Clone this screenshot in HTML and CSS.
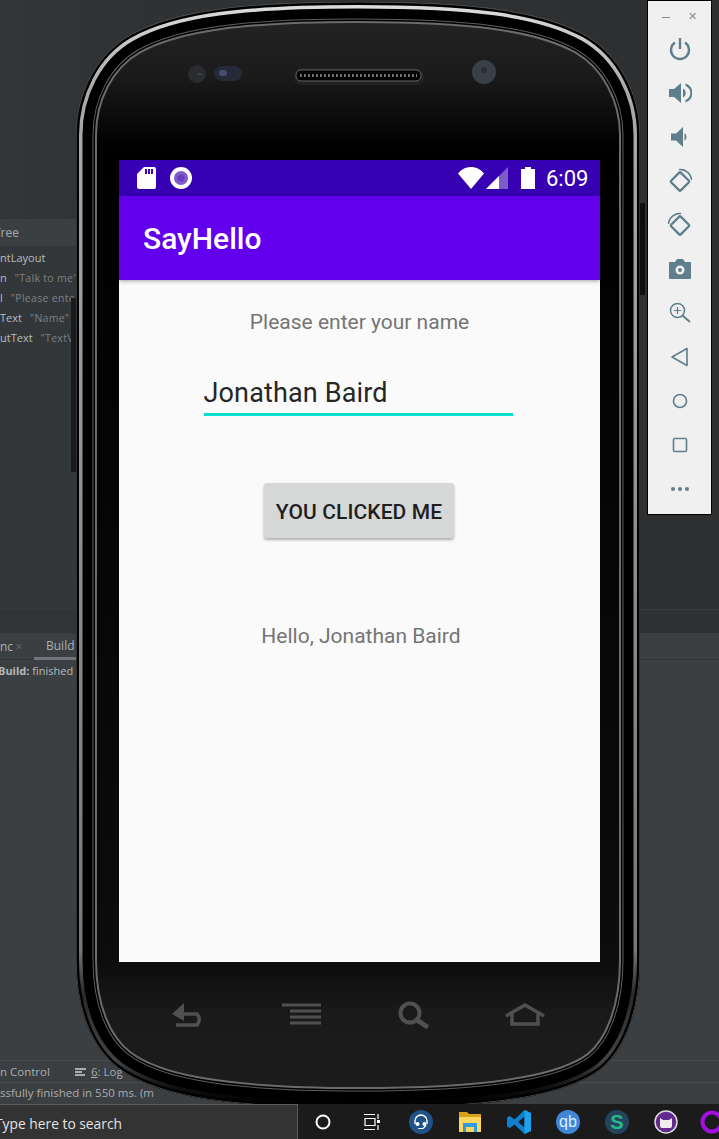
FILE: index.html
```html
<!DOCTYPE html>
<html lang="en">
<head>
<meta charset="utf-8">
<title>SayHello emulator</title>
<link rel="stylesheet" href="styles.css">
</head>
<body>
<div class="desktop">
  <div class="ide">
    <div class="ide-top"></div>
    <div class="tree-panel">
      <div class="tree-head">Tree</div>
      <div class="tree-row first"><span class="tree-name">ntLayout</span></div>
      <div class="tree-row"><span class="tree-name">n</span><span class="tree-val">"Talk to me"</span></div>
      <div class="tree-row"><span class="tree-name">l</span><span class="tree-val">"Please ente</span></div>
      <div class="tree-row"><span class="tree-name">Text</span><span class="tree-val">"Name"</span></div>
      <div class="tree-row"><span class="tree-name">utText</span><span class="tree-val">"TextV</span></div>
    </div>
    <div class="gap-panel"></div>
    <div class="build-panel">
      <div class="build-tabs"><span class="tab-sync">nc</span><span class="tab-x">✕</span><span class="tab-build">Build</span></div>
      <div class="build-line"><b>Build:</b> finished</div>
    </div>
    <div class="tool-strip"><span class="strip-a">n Control</span><svg class="log-icon" width="12" height="8" viewBox="0 0 12 8"><path d="M0 0h11v2H0zM0 3h7v2H0zM0 6h10v2H0z" fill="#a9adb0"/></svg><span class="strip-b"><u>6</u>: Log</span></div>
    <div class="status-strip">ssfully finished in 550 ms. (m</div>
    <div class="taskbar">
      <div class="search-box">Type here to search</div>
      <div class="task-icons">
        <svg width="20" height="20" viewBox="0 0 20 20"><circle cx="10" cy="10" r="6.500" fill="none" stroke="#fff" stroke-width="2"/></svg>
        <svg width="18" height="18" viewBox="0 0 18 18"><path d="M1 1.500h11M1 16.500h11M2 5.500h10v7H2zM15 1v5M15 12v5" fill="none" stroke="#fff" stroke-width="1.200"/><path d="M14 7h3v3h-3z" fill="#fff"/></svg>
        <svg width="24" height="24" viewBox="0 0 24 24"><circle cx="12" cy="12" r="12" fill="#1f5287"/><path d="M6 14v-3a6 6 0 0 1 12 0v3" fill="none" stroke="#fff" stroke-width="1.400"/><circle cx="8.500" cy="14" r="2" fill="#fff"/><circle cx="15.500" cy="14" r="2" fill="#fff"/><path d="M9 18.500h5l3-3" fill="none" stroke="#fff" stroke-width="1.200"/></svg>
        <svg width="22" height="20" viewBox="0 0 22 20"><path d="M0 0h8l2 2h12v18H0z" fill="#d9a21b"/><path d="M0 5h22v15H0z" fill="#fbd75f"/><path d="M4 11h14v9h-3v-5H7v5H4z" fill="#2f9ae0"/></svg>
        <svg width="24" height="24" viewBox="0 0 24 24"><path d="M17.500 0 24 3v18l-6.500 3-10-9.500L2.800 18 0 16.500v-9L2.800 6 7.500 9.500zM17.500 6.500 11 12l6.500 5.500z" fill="#0f80cf"/><path d="M17.500 0 24 3v18l-6.500 3z" fill="#1ea0ec"/></svg>
        <svg width="24" height="24" viewBox="0 0 24 24"><circle cx="12" cy="12" r="12" fill="#3f86d9"/><text x="12" y="17" text-anchor="middle" class="qb">qb</text></svg>
        <svg width="24" height="24" viewBox="0 0 24 24"><circle cx="12" cy="12" r="12" fill="#25445c"/><text x="12" y="19" text-anchor="middle" class="sig">S</text></svg>
        <svg width="24" height="24" viewBox="0 0 24 24"><circle cx="12" cy="12" r="11" fill="#63298f" stroke="#ddd" stroke-width="1.500"/><path d="M6 8l3 2h6l3-2v8q0 2-2 2H8q-2 0-2-2z" fill="#eee"/></svg>
        <svg class="task-last" width="24" height="24" viewBox="0 0 24 24"><circle cx="12" cy="12" r="9.500" fill="none" stroke="#a010e0" stroke-width="4"/></svg>
      </div>
    </div>
  </div>

  <svg class="phone" width="580" height="1104" viewBox="70 0 580 1104">
    <defs>
      <path id="body" d="M358 2C470 2 540 10 585 35C620 55 640 95 640 135V960C640 1010 625 1050 600 1070C570 1092 510 1108 358 1108C210 1108 150 1092 118 1068C92 1048 76 1010 76 960V135C76 95 95 55 130 35C175 10 245 2 358 2Z"/>
      <clipPath id="inside"><use href="#body"/></clipPath>
      <linearGradient id="glass" gradientUnits="userSpaceOnUse" x1="0" y1="0" x2="0" y2="1104">
        <stop offset="0" stop-color="#262626"/>
        <stop offset=".07" stop-color="#1a1a1a"/>
        <stop offset=".135" stop-color="#000"/>
        <stop offset=".87" stop-color="#0c0c0c"/>
        <stop offset=".92" stop-color="#1a1a1a"/>
        <stop offset="1" stop-color="#1c1c1c"/>
      </linearGradient>
      <linearGradient id="shine" gradientUnits="userSpaceOnUse" x1="0" y1="0" x2="0" y2="1104">
        <stop offset="0" stop-color="#e0e0e0"/>
        <stop offset=".08" stop-color="#aaa"/>
        <stop offset=".5" stop-color="#8d8d8d"/>
        <stop offset=".86" stop-color="#777"/>
        <stop offset=".9" stop-color="#2a2a2a"/>
        <stop offset=".96" stop-color="#444"/>
        <stop offset=".985" stop-color="#111"/>
        <stop offset="1" stop-color="#000"/>
      </linearGradient>
    </defs>
    <rect x="71" y="298" width="6" height="174" fill="#1a1a1c"/>
    <rect x="640" y="203" width="5" height="92" fill="#0e0e0e"/>
    <use href="#body" fill="url(#glass)"/>
    <g clip-path="url(#inside)" fill="none">
      <use href="#body" stroke="#6b6b6b" stroke-width="42"/>
      <use href="#body" stroke="#000" stroke-width="38"/>
      <use href="#body" stroke="#5e5e5e" stroke-width="35"/>
      <use href="#body" stroke="#000" stroke-width="33"/>
      <use href="#body" stroke="url(#shine)" stroke-width="13"/>
      <use href="#body" stroke="#000" stroke-width="6"/>
      <use href="#body" stroke="#555" stroke-width="1.200"/>
    </g>
    <circle cx="197" cy="74" r="9" fill="#2b2c30"/>
    <rect x="197" y="73.500" width="5" height="1" fill="#4a5064"/>
    <rect x="214" y="66" width="28" height="15" rx="7.500" fill="#262a38"/>
    <rect x="219" y="70" width="8" height="6" rx="3" fill="#46506e"/>
    <rect x="294" y="68" width="130" height="17" rx="7" fill="#222"/>
    <rect x="296" y="70" width="125" height="11" rx="5" fill="#000" stroke="#666" stroke-width="1"/>
    <line x1="300" y1="75.500" x2="417" y2="75.500" stroke="#777" stroke-width="3" stroke-dasharray="1.800 2.200"/>
    <circle cx="484" cy="72" r="12" fill="#3a4047"/>
    <circle cx="484" cy="70" r="3" fill="#2b2f34"/>
    <g fill="none" stroke="#505050" stroke-width="4">
      <path d="M176 1014H197A8 8 0 0 1 197 1025H176" stroke-width="3.500"/>
      <path d="M282 1005H321M290 1011H321M290 1017H321M290 1023H321" stroke-width="3"/>
      <circle cx="410" cy="1013" r="9.500"/>
      <path d="M417 1020L426 1026" stroke-linecap="round" stroke-width="5"/>
      <path d="M506 1016L525 1005L544 1016" stroke-width="3.500"/>
      <path d="M512 1014V1024H538V1014" stroke-width="3.500"/>
    </g>
    <path d="M172 1014L184 1003V1021Z" fill="#505050"/>
  </svg>

  <main class="screen">
    <div class="status-bar">
      <svg width="19" height="22" viewBox="0 0 19 22"><path d="M7 0h10q2 0 2 2v18q0 2-2 2H2q-2 0-2-2V7z" fill="#fff"/><path d="M8 2h2v5H8zM11 2h2v5h-2zM14 2h2v5h-2z" fill="#3700b3"/></svg>
      <svg class="record" width="22" height="22" viewBox="0 0 22 22"><circle cx="11" cy="11" r="11" fill="#fff"/><circle cx="11" cy="11" r="7" fill="#7e5cc9"/><circle cx="11" cy="11" r="3.500" fill="#6a3cc0"/></svg>
      <span class="status-spacer"></span>
      <svg width="26" height="22" viewBox="0 0 28 22" preserveAspectRatio="none"><path d="M0 6.500C4 2 9 0 14 0s10 2 14 6.500L14 22z" fill="#fff"/></svg>
      <svg class="signal" width="22" height="22" viewBox="0 0 22 22"><path d="M22 0V22H0z" fill="#7e5cc9"/><path d="M13 9V22H0z" fill="#fff"/></svg>
      <svg class="battery" width="14" height="22" viewBox="0 0 14 22"><path d="M4 0h6v2h4v20H0V2h4z" fill="#fff"/></svg>
      <span class="clock">6:09</span>
    </div>
    <header class="app-bar">SayHello</header>
    <div class="content">
      <p class="prompt">Please enter your name</p>
      <div class="field">Jonathan Baird</div>
      <button class="action" type="button">You clicked me</button>
      <p class="greeting">Hello, Jonathan Baird</p>
    </div>
  </main>

  <aside class="emu-bar">
    <div class="emu-title"><span class="emu-min">–</span><span class="emu-close">✕</span></div>
    <svg class="emu-icon" viewBox="0 0 24 24"><path d="M7 5.500a9 9 0 1 0 10 0" fill="none" stroke="#5f7f8c" stroke-width="2.400"/><path d="M12 1v11" stroke="#5f7f8c" stroke-width="2.400"/></svg>
    <svg class="emu-icon" viewBox="0 0 24 24"><path d="M1 8h5l7-6v20l-7-6H1z" fill="#5f7f8c"/><path d="M15 7.500a5 5 0 0 1 0 9zM17.500 2.500a10 10 0 0 1 0 19v-2.500a7.500 7.500 0 0 0 0-14z" fill="#5f7f8c"/></svg>
    <svg class="emu-icon" viewBox="0 0 24 24"><path d="M3 8.500h5l7-6.500v20l-7-6.500H3z" fill="#5f7f8c"/><path d="M16.500 8a5 5 0 0 1 0 8z" fill="#5f7f8c"/></svg>
    <svg class="emu-icon lg" viewBox="0 0 24 24" fill="none" stroke="#5f7f8c"><rect x="5.500" y="6" width="13" height="13" rx="1" transform="rotate(45 12 12.500)" stroke-width="2.200"/><path d="M11 1a11 11 0 0 1 12 10" stroke-width="1.500"/></svg>
    <svg class="emu-icon lg" viewBox="0 0 24 24" fill="none" stroke="#5f7f8c"><rect x="5.500" y="6" width="13" height="13" rx="1" transform="rotate(45 12 12.500)" stroke-width="2.200"/><path d="M1 11A11 11 0 0 1 13 1" stroke-width="1.500"/></svg>
    <svg class="emu-icon" viewBox="0 0 24 24"><path d="M2 5h5l2-3h6l2 3h5q1 0 1 1v15q0 1-1 1H2q-1 0-1-1V6q0-1 1-1z" fill="#5f7f8c"/><circle cx="12" cy="13" r="4.500" fill="#f0f0f0"/><circle cx="12" cy="13" r="2" fill="#5f7f8c"/></svg>
    <svg class="emu-icon" viewBox="0 0 24 24" fill="none" stroke="#5f7f8c"><circle cx="9.500" cy="9.500" r="7" stroke-width="1.500"/><path d="M6 9.500h7M9.500 6v7" stroke-width="1.200"/><path d="M14.500 14.500L22 21" stroke-width="2"/></svg>
    <svg class="emu-icon" viewBox="0 0 24 24"><path d="M19 3.500V20.500L4 12Z" fill="none" stroke="#5f7f8c" stroke-width="1.600" stroke-linejoin="round"/></svg>
    <svg class="emu-icon" viewBox="0 0 24 24"><circle cx="12" cy="12" r="6.500" fill="none" stroke="#5f7f8c" stroke-width="1.600"/></svg>
    <svg class="emu-icon" viewBox="0 0 24 24"><rect x="5.500" y="5.500" width="13" height="13" rx="1" fill="none" stroke="#5f7f8c" stroke-width="1.600"/></svg>
    <svg class="emu-icon" viewBox="0 0 24 24"><circle cx="5" cy="12" r="2" fill="#5f7f8c"/><circle cx="12" cy="12" r="2" fill="#5f7f8c"/><circle cx="19" cy="12" r="2" fill="#5f7f8c"/></svg>
  </aside>
</div>
</body>
</html>
```
FILE: styles.css
```css
* { box-sizing: border-box; }
html, body { margin: 0; padding: 0; }
body { width: 719px; height: 1139px; overflow: hidden; background: #3c3f41; font-family: "Open Sans", "Liberation Sans", sans-serif; }
.desktop { position: relative; width: 719px; height: 1139px; overflow: hidden; }

.ide { display: flex; flex-direction: column; height: 100%; color: #a9b7c6; font-size: 11px; }
.ide-top { height: 218px; flex: none; background: linear-gradient(90deg, #333638 0, #2f3234 150px, #2d2f31 100%); }
.tree-panel { height: 391px; flex: none; background: linear-gradient(90deg, #33373a 0, #33373a 300px, #2d2f31 300px); }
.tree-head { height: 28px; line-height: 28px; background: #3c3f41; width: 76px; color: #a8acaf; border-top: 1px solid #323436; text-indent: -6px; font-size: 12px; }
.tree-row { height: 20px; line-height: 20px; white-space: nowrap; width: 76px; overflow: hidden; display: flex; gap: 8px; }
.tree-row.first { margin-top: 2px; }
.tree-name { color: #b8bcbe; }
.tree-val { color: #7d8184; font-size: 10.500px; letter-spacing: .3px; }
.gap-panel { height: 24px; flex: none; background: linear-gradient(90deg, #303436 0, #303436 300px, #2f3133 300px); border-top: 1px solid #38393b; }
.build-panel { height: 427px; flex: none; background: #3c3f41; }
.build-tabs { height: 27px; display: flex; align-items: center; border-bottom: 1px solid #333537; color: #a9b0b6; font-size: 12px; }
.tab-sync { width: 15px; white-space: nowrap; }
.tab-x { width: 19px; font-size: 9px; color: #666; }
.tab-build { width: 42px; height: 27px; line-height: 26px; padding-left: 12px; border-bottom: 3px solid #6f757a; flex: none; }
.build-line { padding-top: 2px; line-height: 18px; color: #b4b8bb; white-space: nowrap; }
.build-line b { font-weight: 700; margin-left: -2px; }
.tool-strip { height: 22px; flex: none; background: #3c3f41; border-top: 1px solid #4c4a48; display: flex; align-items: center; font-size: 11.500px; color: #a9adb0; }
.log-icon { margin-left: 25px; margin-right: 4px; }
.status-strip { height: 22px; flex: none; background: #3c3f41; border-top: 1px solid #4c4a48; line-height: 20px; font-size: 11.500px; color: #a9adb0; white-space: nowrap; }
.taskbar { height: 35px; flex: none; display: flex; background: #1b1b1b; }
.search-box { width: 298px; flex: none; background: #333; border-top: 1px solid #5b5b5b; border-right: 1px solid #5b5b5b; color: #e2e2e2; font-size: 13.800px; line-height: 38px; text-indent: -5px; white-space: nowrap; overflow: hidden; }
.task-icons { display: grid; grid-template-columns: repeat(9, 49px); align-items: center; justify-items: center; flex: none; }
.task-last { margin-left: -5px; }
.qb { font: 16px "Liberation Sans", sans-serif; fill: #dcecff; }
.sig { font: 700 20px "Liberation Sans", sans-serif; fill: #28b98a; }

.phone { position: absolute; left: 70px; top: 0; width: 580px; height: 1104px; }

.screen { position: absolute; left: 119px; top: 160px; width: 481px; height: 802px; background: #fafafa; display: flex; flex-direction: column; font-family: Roboto, sans-serif; }
.status-bar { height: 36px; background: #3700b3; display: flex; align-items: center; padding: 0 11px 0 18px; color: #fff; flex: none; }
.record { margin-left: 14px; }
.status-spacer { flex: 1; }
.signal { margin-left: 2px; }
.battery { margin-left: 13px; }
.clock { margin-left: 11px; font-size: 22px; width: 43px; white-space: nowrap; }
.app-bar { height: 84px; flex: none; background: #6200ee; color: #fff; font-size: 30px; font-weight: 500; line-height: 85px; padding-left: 24px; box-shadow: 0 1px 4px rgba(0,0,0,.35); position: relative; }
.content { flex: 1; display: flex; flex-direction: column; align-items: center; }
.prompt { margin: 29px 0 0; font-size: 21px; line-height: 27px; color: #757575; }
.field { width: 309px; margin: 34px 0 0 -3px; height: 46px; font-size: 27px; line-height: 47px; letter-spacing: .15px; color: #262626; border-bottom: 3px solid #00e0cc; }
.action { margin: 67px 0 0 -1px; width: 190px; height: 55px; border: 0; border-radius: 3px; background: #d6d7d7; color: #1f1f1f; font: 500 21px Roboto, sans-serif; letter-spacing: .1px; text-transform: uppercase; box-shadow: 0 2px 3px rgba(0,0,0,.3); padding: 2px 0 0; }
.greeting { margin: 84px 0 0 3px; font-size: 21px; line-height: 28px; color: #757575; }

.emu-bar { position: absolute; left: 647px; top: 0; width: 65px; height: 515px; background: #f0f0f0; border: 1px solid #000; display: flex; flex-direction: column; align-items: center; gap: 20px; padding-top: 36px; }
.emu-title { position: absolute; top: 5px; left: 0; right: 0; display: flex; justify-content: space-between; padding: 0 14px 0 14px; font: 14px "Liberation Sans", sans-serif; color: #7d8f98; line-height: 20px; }
.emu-close { font-size: 11px; }
.emu-icon { width: 24px; height: 24px; flex: none; }
.emu-icon.lg { transform: scale(1.050); }
```
